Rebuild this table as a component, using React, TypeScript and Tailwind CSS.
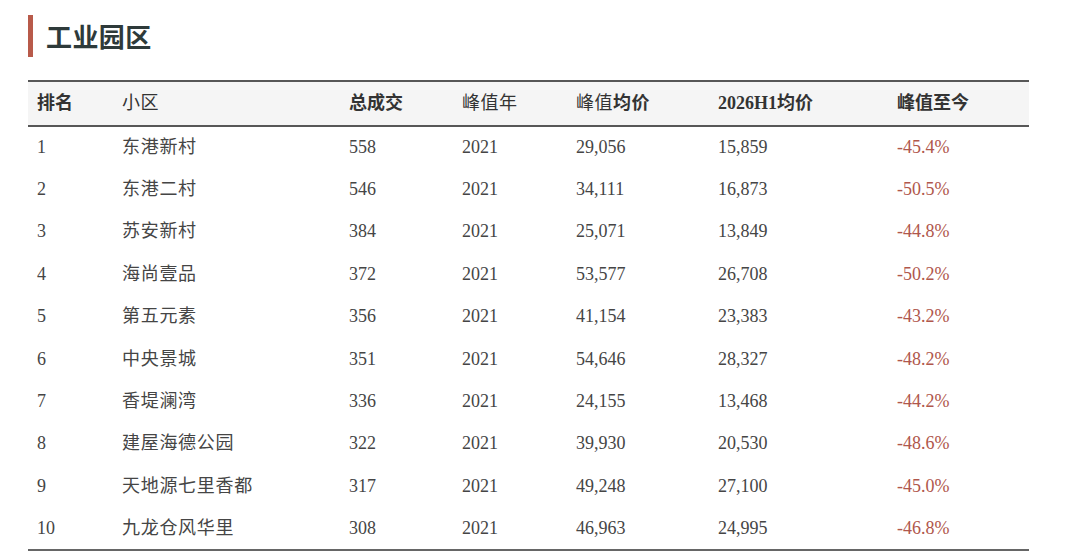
const rows = [
  ["1", "东港新村", "558", "2021", "29,056", "15,859", "-45.4%"],
  ["2", "东港二村", "546", "2021", "34,111", "16,873", "-50.5%"],
  ["3", "苏安新村", "384", "2021", "25,071", "13,849", "-44.8%"],
  ["4", "海尚壹品", "372", "2021", "53,577", "26,708", "-50.2%"],
  ["5", "第五元素", "356", "2021", "41,154", "23,383", "-43.2%"],
  ["6", "中央景城", "351", "2021", "54,646", "28,327", "-48.2%"],
  ["7", "香堤澜湾", "336", "2021", "24,155", "13,468", "-44.2%"],
  ["8", "建屋海德公园", "322", "2021", "39,930", "20,530", "-48.6%"],
  ["9", "天地源七里香都", "317", "2021", "49,248", "27,100", "-45.0%"],
  ["10", "九龙仓风华里", "308", "2021", "46,963", "24,995", "-46.8%"],
];

const widths = ["w-[85px]", "w-[227px]", "w-[113px]", "w-[114px]", "w-[142px]", "w-[179px]", "w-[141px]"];

export default function App() {
  return (
    <div className="w-[1080px] h-[560px] bg-white font-['Liberation_Serif','Noto_Sans_CJK_SC',serif] overflow-hidden">
      <div className="flex items-center gap-[13px] pl-[28px] pt-[15px]">
        <div className="w-[5px] h-[42px] bg-[#b85a4a]" />
        <h1 className="text-[26px] leading-none font-bold tracking-[0.4px] text-[#2e3a3a] font-['Noto_Sans_CJK_SC',sans-serif]">
          工业园区
        </h1>
      </div>

      <table className="ml-[28px] mt-[23px] w-[1001px] table-fixed border-collapse text-[18px]">
        <colgroup>
          {widths.map((w, i) => (
            <col key={i} className={w} />
          ))}
        </colgroup>
        <thead>
          <tr className="h-[45px] bg-[#f5f5f5] border-t-2 border-b-2 border-[#575757] text-[#333]">
            <th className="pl-[9px] text-left font-bold">排名</th>
            <th className="pl-[9px] text-left font-normal tracking-[0.5px]">小区</th>
            <th className="pl-[9px] text-left font-semibold">总成交</th>
            <th className="pl-[9px] text-left font-normal tracking-[0.5px]">峰值年</th>
            <th className="pl-[9px] text-left font-normal tracking-[0.5px]">
              峰值<span className="font-bold">均价</span>
            </th>
            <th className="pl-[9px] text-left font-bold">2026H1均价</th>
            <th className="pl-[9px] text-left font-semibold">峰值至今</th>
          </tr>
        </thead>
        <tbody className="border-b-2 border-[#666]">
          {rows.map((r) => (
            <tr key={r[0]} className="h-[42.4px] text-[#454545]">
              {r.map((c, i) => (
                <td
                  key={i}
                  className={`pl-[9px] ${i === 6 ? "text-[#b0574c]" : ""} ${i === 1 ? "tracking-[0.7px]" : ""}`}
                >
                  {c}
                </td>
              ))}
            </tr>
          ))}
        </tbody>
      </table>
    </div>
  );
}
